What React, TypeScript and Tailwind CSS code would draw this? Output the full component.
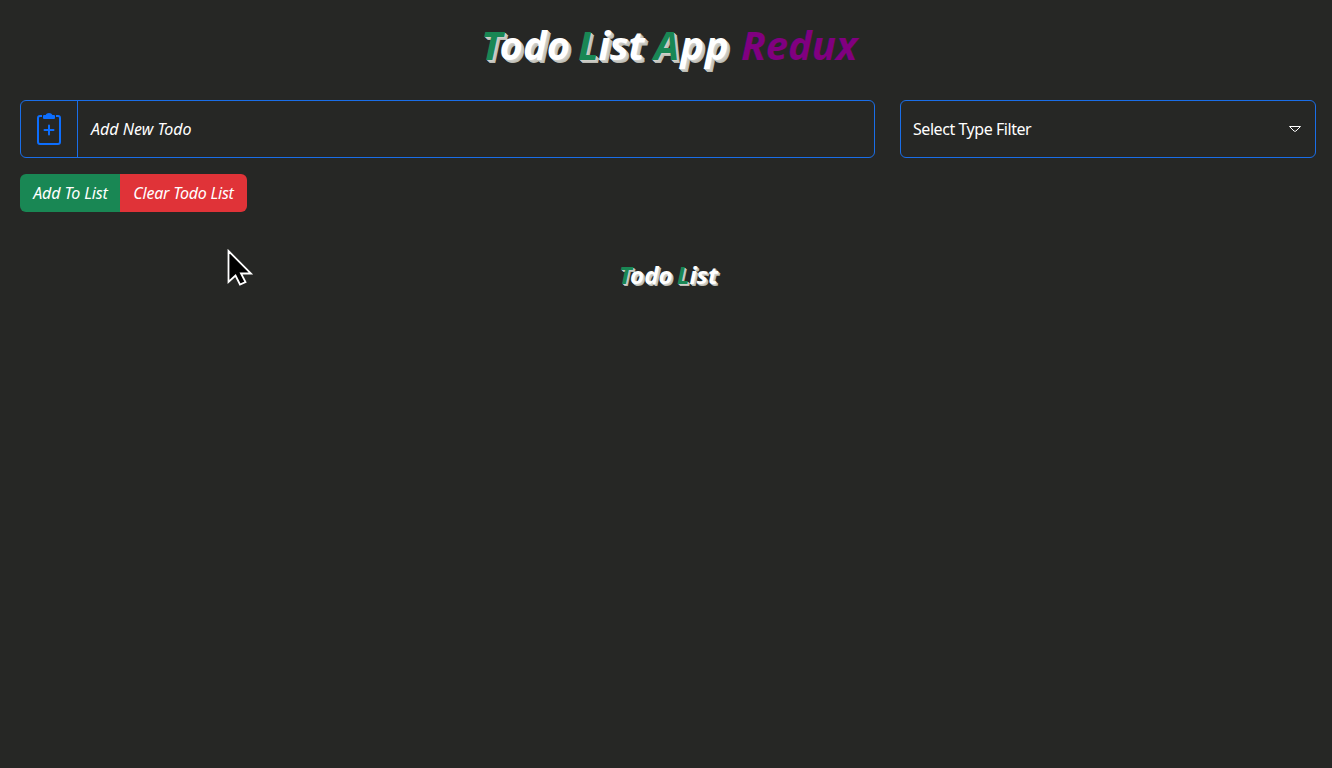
import React from "react";

const headingShadow = "[text-shadow:1px_1px_0_#cfcfca,2px_2px_0_#c6c6c0,3px_3px_0_#bcbcb4]";
const smallShadow = "[text-shadow:1px_1px_0_#cfcfca,2px_2px_0_#bcbcb4]";

function Cap({ children }: { children: React.ReactNode }) {
  return <span className="text-[#198754]">{children}</span>;
}

export default function App() {
  return (
    <div className="min-h-screen bg-[#262725] pr-4 pl-5 font-['Noto_Sans',sans-serif] text-white">
      <h1 className="grid h-[100px] grid-cols-[97px_76px_87px_114px] items-start justify-center pt-[15px] text-[40px] leading-[60px] font-bold whitespace-nowrap italic">
        <span className={headingShadow}><Cap>T</Cap>odo</span>
        <span className={`${headingShadow} tracking-[-0.5px]`}><Cap>L</Cap>ist</span>
        <span className={`${headingShadow} tracking-[1px]`}><Cap>A</Cap>pp</span>
        <span className="text-[#800080]">Redux</span>
      </h1>
      <div className="flex gap-[25px]">
        <div className="flex h-[58px] flex-1 rounded-md border border-[#1a6ee8]">
          <div className="flex w-[57px] items-center justify-center border-r border-[#1a6ee8] text-[#0d6efd]">
            <svg width="32" height="32" viewBox="0 0 32 32" fill="none" stroke="currentColor" strokeWidth="2">
              <path d="M9 3H7a2 2 0 0 0-2 2v24a2 2 0 0 0 2 2h18a2 2 0 0 0 2-2V5a2 2 0 0 0-2-2h-2" />
              <path d="M16 12.500v9M11.500 17h9" strokeLinecap="round" />
              <path d="M10 5V3q0-1 1-1h1.500q1-2 3.500-2t3.500 2H21q1 0 1 1v2q0 1-1 1H11q-1 0-1-1z" fill="currentColor" stroke="none" />
            </svg>
          </div>
          <span className="flex items-center pl-[13px] text-base italic">Add New Todo</span>
        </div>
        <div className="flex h-[58px] w-[416px] items-center justify-between rounded-md border border-[#1a6ee8] px-3">
          <span className="text-base tracking-[-0.45px]">Select Type Filter</span>
          <svg width="14" height="8" viewBox="0 0 14 8" fill="none" stroke="white" className="mr-px"><path d="M1.500 1.500h11L7.800 6.200H6.200z" /></svg>
        </div>
      </div>
      <div className="mt-4 flex h-[38px] text-base italic">
        <button className="w-[100px] rounded-l-md bg-[#198754] pl-px tracking-[-0.1px]">Add To List</button>
        <button className="w-[127px] rounded-r-md bg-[#e03338] tracking-[-0.2px]">Clear Todo List</button>
      </div>
      <h2 className="mt-[45px] grid grid-cols-[58px_40px] justify-center text-[24px] leading-[36px] font-bold italic">
        <span className={smallShadow}><Cap>T</Cap>odo</span>
        <span className={smallShadow}><Cap>L</Cap>ist</span>
      </h2>
      <svg className="absolute top-[247px] left-[225px]" width="32" height="42" viewBox="0 0 32 42">
        <path d="M3.500 4v31l7-6.500 4.500 9 5.500-2.500-4.500-8.500h10z" fill="black" stroke="white" strokeWidth="1.800" />
      </svg>
    </div>
  );
}
